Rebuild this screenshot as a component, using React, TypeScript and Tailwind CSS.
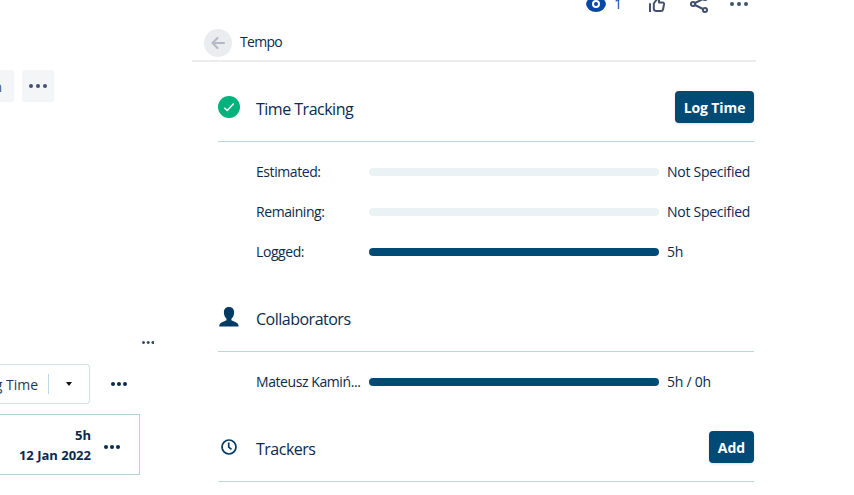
import type { ReactNode } from 'react';

function Dots({ className = '', size = 4, gap = 3 }: { className?: string; size?: number; gap?: number }) {
  const width = size * 3 + gap * 2;
  return (
    <svg className={className} width={width} height={size} viewBox={`0 0 ${width} ${size}`} fill="currentColor">
      {[0, 1, 2].map((i) => (
        <circle key={i} cx={size / 2 + i * (size + gap)} cy={size / 2} r={size / 2} />
      ))}
    </svg>
  );
}

function CheckIcon() {
  return (
    <svg width="22" height="22" viewBox="0 0 22 22" fill="none">
      <circle cx="11" cy="11" r="11" fill="#00b37d" />
      <path d="M6.3 11.7 9.3 14.5 15.7 7.5" stroke="#fff" strokeWidth="1.5" />
    </svg>
  );
}

function PersonIcon() {
  return (
    <svg width="22" height="22" viewBox="0 0 22 22" fill="#003b66">
      <path d="M11 1C7.7 1 5.9 3.1 5.9 6.3c0 2.8 1 5.1 2.6 6.5v1.5L3.6 16.4C2 17.1 1.2 18.3 1.2 20.6h19.4c0-2.3-.8-3.5-2.4-4.2l-4.8-2.1v-1.500c1.700-1.400 2.700-3.700 2.700-6.500C16.100 3.100 14.300 1 11 1Z" />
    </svg>
  );
}

function ClockIcon() {
  return (
    <svg width="22" height="22" viewBox="0 0 22 22" fill="none" stroke="#003b66">
      <circle cx="11" cy="11" r="7" strokeWidth="1.7" />
      <path d="M10.7 6.5v4.6l2.8 2.2" strokeWidth="1.7" />
    </svg>
  );
}

function Section({ icon, title, action, children }: { icon: ReactNode; title: ReactNode; action?: ReactNode; children?: ReactNode }) {
  return (
    <section>
      <header className="flex h-[60px] items-center border-b border-[#bcd6dc] pb-[9px]">
        {icon}
        <h2 className="ml-4 pt-[3px] text-[16px] leading-[22px] tracking-[-0.5px]">{title}</h2>
        <div className="ml-auto">{action}</div>
      </header>
      {children && <div className="pt-[10px] pb-5">{children}</div>}
    </section>
  );
}

function Row({ label, value, filled }: { label: ReactNode; value: ReactNode; filled?: boolean }) {
  return (
    <div className="flex h-10 items-center pl-[38px] text-[14px] leading-5 whitespace-nowrap">
      <span className="w-[113px] tracking-[-0.42px]">{label}</span>
      <div className={`h-2 w-[290px] rounded-full ${filled ? 'bg-[#004a76]' : 'bg-[#eaf2f5]'}`} />
      <span className="ml-2 tracking-[-0.27px]">{value}</span>
    </div>
  );
}

function ActionButton({ className, children }: { className: string; children: ReactNode }) {
  return (
    <button className={`flex h-8 items-center justify-center rounded-[4px] bg-[#004a76] text-[14px] font-bold whitespace-nowrap text-white shadow-sm ${className}`}>
      {children}
    </button>
  );
}

export default function App() {
  return (
    <div className="flex h-[495px] w-[854px] overflow-hidden bg-white font-['Open_Sans','Noto_Sans',sans-serif] text-[#0b2a4e]">
      <div className="w-[192px] shrink-0 pt-[70px]">
        <div className="flex gap-2">
          <div className="flex h-8 w-[14px] items-center justify-end rounded-r-[3px] bg-[#f4f5f7] pr-3 text-[14px] text-[#42526e]">
            <span>n</span>
          </div>
          <div className="flex size-8 items-center justify-center rounded-[3px] bg-[#f4f5f7] text-[#42526e]">
            <Dots />
          </div>
        </div>
        <div className="mt-[239px] pl-[142px] text-[#344563]">
          <Dots className="block" size={3} gap={1.7} />
        </div>
        <div className="mt-[20px] flex h-10 items-center">
          <div className="flex h-10 w-[90px] items-center rounded-r-[4px] border border-l-0 border-[#cfe2e8] text-[14px]">
            <div className="flex h-5 w-[49px] items-center justify-end border-r border-[#bcd6e6] pr-[10px] whitespace-nowrap text-[#253858]">
              <span>Log Time</span>
            </div>
            <svg className="ml-[17px]" width="6" height="4" viewBox="0 0 6 4">
              <path d="M0 0h6L3 4Z" fill="#111" />
            </svg>
          </div>
          <Dots className="ml-[21px] text-[#0b2a4e]" size={4} gap={2} />
        </div>
        <div className="mt-[10px] flex h-[61px] w-[140px] items-center justify-end border border-l-0 border-[#b5d2d8] pr-[19px]">
          <div className="text-right text-[13px] leading-5 font-bold whitespace-nowrap">
            <div>5h</div>
            <div>12 Jan 2022</div>
          </div>
          <Dots className="mt-1 ml-[13px]" size={4} gap={2} />
        </div>
      </div>

      <div className="w-[564px]">
        <div className="flex h-[62px] flex-col justify-between border-b-2 border-[#ebecf0]">
          <div className="flex h-[14px] items-start pl-[394px] text-[#42526e]">
            <svg width="20" height="14" viewBox="0 0 20 14">
              <path d="M0 4C1-1 5-4 10-4s9 3 10 8c-1 5-5 8-10 8S1 9 0 4Z" fill="#0747a6" />
              <circle cx="10" cy="4" r="3" fill="none" stroke="#fff" strokeWidth="2" />
            </svg>
            <span className="-mt-[6px] ml-2 w-[10px] text-[14px] leading-5 text-[#0747a6]">1</span>
            <svg className="ml-6" width="18" height="14" viewBox="0 0 18 14" fill="none" stroke="currentColor" strokeWidth="2">
              <path d="M2 3.3V12" />
              <path d="M5.8 3.5v5Q5.8 11 8.5 11H13q1.7 0 2-1.5l1-5Q16.3 2.5 14.5 2.5H11V-2Q9-2 8.5 0Z" strokeLinejoin="round" />
            </svg>
            <svg className="ml-[24px]" width="18" height="14" viewBox="0 0 18 14" fill="none" stroke="currentColor" strokeWidth="2">
              <circle cx="3" cy="4" r="2.1" />
              <circle cx="15" cy="10" r="2.1" />
              <circle cx="15" cy="-2" r="2.1" />
              <path d="m5 5 8 4M5 3l8-4" />
            </svg>
            <Dots className="mt-[2px] ml-[22px]" />
          </div>
          <div className="flex items-center pb-[3px] pl-3">
            <div className="flex size-7 items-center justify-center rounded-full bg-[#ebecf0]">
              <svg width="14" height="12" viewBox="0 0 14 12" fill="none" stroke="#b3bac5" strokeWidth="2" strokeLinecap="round" strokeLinejoin="round">
                <path d="M6.5 1 1.5 6l5 5M2 6h11" />
              </svg>
            </div>
            <span className="ml-2 pb-[2px] text-[14px] leading-5 tracking-[-0.7px]">Tempo</span>
          </div>
        </div>
        <main className="pt-5 pr-[2px] pl-[26px]">
          <Section icon={<CheckIcon />} title={<span>Time Tracking</span>} action={<ActionButton className="w-[79px]"><span className="tracking-[-0.1px]">Log Time</span></ActionButton>}>
            <Row label={<span>Estimated:</span>} value={<span>Not Specified</span>} />
            <Row label={<span>Remaining:</span>} value={<span>Not Specified</span>} />
            <Row label={<span>Logged:</span>} value={<span>5h</span>} filled />
          </Section>
          <Section icon={<PersonIcon />} title={<span>Collaborators</span>}>
            <Row label={<span>Mateusz Kamiń...</span>} value={<span>5h / 0h</span>} filled />
          </Section>
          <Section icon={<ClockIcon />} title={<span>Trackers</span>} action={<ActionButton className="w-[45px]"><span>Add</span></ActionButton>} />
        </main>
      </div>
    </div>
  );
}
